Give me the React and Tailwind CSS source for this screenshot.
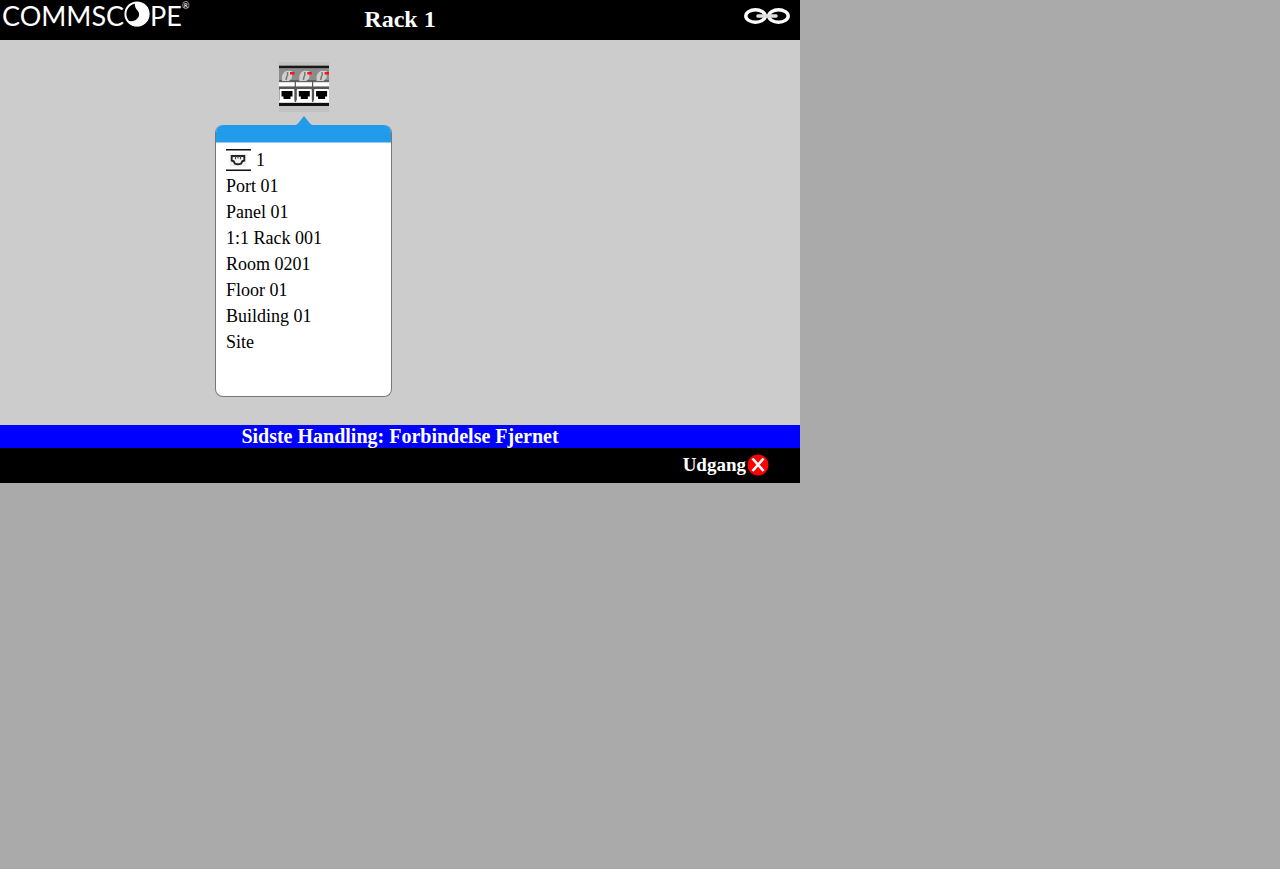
import React from "react";

const LOCATION = ["Port 01", "Panel 01", "1:1 Rack 001", "Room 0201", "Floor 01", "Building 01", "Site"];

function Logo() {
  return (
    <div className="flex items-start font-['Lato',sans-serif] text-[27px] leading-[32px] text-white">
      <span>COMMSC</span>
      <svg viewBox="0 0 26 26" className="mt-px h-[26px] w-[26px]" aria-hidden="true">
        <circle cx="13" cy="13" r="11.6" fill="#000" stroke="#fff" strokeWidth="2" />
        <path d="M11 1.300C20 .5 25.200 6.500 25.200 13S20 25.200 13 25.200C8 25.200 4.500 22.500 3 19.500c4 1.500 9.500.5 11.500-3.500 2-4.500-1-6-2.500-8.500-1.200-2-1.500-4.500-1-6.200z" fill="#fff" />
      </svg>
      <span>PE</span>
      <span className="text-[9px] leading-[12px]">®</span>
    </div>
  );
}

function LinkIcon() {
  return (
    <svg viewBox="0 0 46 16" className="h-4 w-[46px]" fill="none" stroke="#fff" aria-hidden="true">
      <ellipse cx="11.500" cy="8" rx="9.700" ry="6.200" strokeWidth="3.400" />
      <ellipse cx="34.500" cy="8" rx="9.700" ry="6.200" strokeWidth="3.400" />
      <path d="M14 8h18" stroke="#e0e0e0" strokeWidth="3.600" strokeLinecap="round" />
    </svg>
  );
}

function PanelIcon() {
  return (
    <svg viewBox="0 0 50 50" className="h-[50px] w-[50px]" aria-hidden="true">
      <rect width="50" height="50" fill="#c2c2c2" />
      <rect y="3" width="50" height="1" fill="#888" />
      <rect y="4" width="50" height="2.500" fill="#181818" />
      <rect y="6.500" width="50" height="13.500" fill="#8c8c8c" />
      <rect y="18" width="50" height="2" fill="#606060" />
      <rect y="20.500" width="50" height="4" fill="#fff" />
      <rect y="24.500" width="50" height="2.500" fill="#555" />
      <rect y="27" width="50" height="13" fill="#555" />
      <rect y="38.500" width="50" height="2" fill="#eee" />
      <rect y="41" width="50" height="3" fill="#111" />
      {[0, 17.300, 34.600].map((x) => (
        <g key={x} transform={`translate(${x} 0)`}>
          <path d="M3 19V14q2-6 8-5h2v7l-3 3z" fill="#cfcfcf" />
          <path d="M7 18l1-4M8.500 10v4" stroke="#777" strokeWidth="1.500" />
          <path d="M11 10h4.500v2.500H11z" fill="#fa1414" />
          <rect x=".5" y="27" width="15" height="13" rx="1" fill="#fff" />
          <path d="M2.500 29h11v5.500h-2V37h-7v-2.500h-2z" fill="#000" />
          <path d="M16.300 19v21" stroke="#555" strokeWidth="1.200" />
        </g>
      ))}
    </svg>
  );
}

function PortIcon() {
  return (
    <svg viewBox="0 0 25 22" className="h-[22px] w-[25px]" aria-hidden="true">
      <rect width="25" height="22" fill="#fff" />
      <rect x="3.500" y="4.500" width="17" height="13" fill="#f1f1f1" />
      <path d="M0 .8h25M0 21.200h25" stroke="#111" strokeWidth="1.600" />
      <path d="M5.700 7h12.600v4.500l-2 .8-1.300 2.400q-3 1.200-6 0l-1.300-2.400-2-.8z" fill="#f4f4f4" stroke="#222" strokeWidth="1.900" />
      <path d="M9.500 7v3.300M12 7v2.500M14.500 7v3.300" stroke="#444" strokeWidth="1.200" />
    </svg>
  );
}

function CloseIcon() {
  return (
    <svg viewBox="0 0 22 22" className="h-[22px] w-[22px]" aria-hidden="true">
      <circle cx="11" cy="11" r="10.500" fill="#f00" />
      <path d="M5.500 4.500l11 12.500M16.500 4.500l-11 12.500" stroke="#fff" strokeWidth="2.600" />
    </svg>
  );
}

export default function App() {
  return (
    <div className="min-h-screen bg-[#aaaaaa] font-['Liberation_Serif',serif] text-black">
      <div className="w-full max-w-[800px]">
        <header className="grid h-10 grid-cols-[1fr_auto_1fr] items-start bg-black text-white">
          <div className="pl-[2px]">
            <Logo />
          </div>
          <h1 className="pt-[3px] text-2xl leading-8 font-bold">Rack 1</h1>
          <button type="button" aria-label="Link" className="mt-2 mr-[10px] justify-self-end">
            <LinkIcon />
          </button>
        </header>

        <main className="bg-[#cccccc] pt-[22px] pb-7 pl-[215px]">
          <div className="flex w-[177px] flex-col items-center">
            <PanelIcon />
            <svg viewBox="0 0 16 10" className="mt-1 h-[9px] w-4" preserveAspectRatio="none" aria-hidden="true">
              <path d="M0 10Q2 9 3 7L8 0l5 7q1 2 3 3z" fill="#229bea" />
            </svg>
            <section className="w-full overflow-hidden rounded-lg border border-t-0 border-[#777777] bg-white">
              <div className="-mx-px h-[18px] border-b border-[#90cdf4] bg-[#229bea]" />
              <ul className="px-[10px] pt-1 pb-[41px] text-[18px] leading-[26px]">
                <li className="flex items-center gap-[5px]">
                  <PortIcon />
                  <span>1</span>
                </li>
                {LOCATION.map((item) => (
                  <li key={item}>{item}</li>
                ))}
              </ul>
            </section>
          </div>
        </main>

        <p className="bg-[#0000ff] text-center text-[20px] leading-[23px] font-bold text-white">
          Sidste Handling: Forbindelse Fjernet
        </p>
        <footer className="flex h-[35px] items-start justify-end bg-black pt-[6px] pr-[31px] text-white">
          <button type="button" className="flex items-center gap-px text-[19px] leading-[22px] font-bold">
            Udgang
            <CloseIcon />
          </button>
        </footer>
      </div>
    </div>
  );
}
